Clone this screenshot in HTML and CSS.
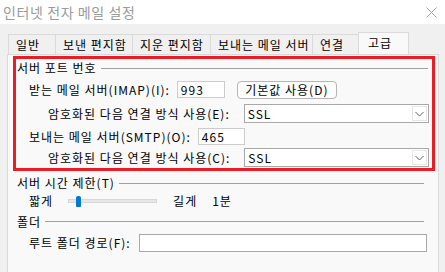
FILE: index.html
```html
<!DOCTYPE html>
<html>
<head>
  <meta charset="UTF-8">
  <link rel="stylesheet" href="styles.css">
</head>
<body>
  <div class="titlebar">
    <span class="title">인터넷 전자 메일 설정</span>
    <svg class="close" width="11" height="11" viewBox="0 0 11 11">
      <path d="M0.5 0.5 L10.5 10.5 M10.5 0.5 L0.5 10.5" stroke="#a0a0a0" stroke-width="1" fill="none"/>
    </svg>
  </div>

  <div class="dialog">
    <div class="tabs">
      <div class="tab tab-general">일반</div>
      <div class="tab tab-sent">보낸 편지함</div>
      <div class="tab tab-deleted">지운 편지함</div>
      <div class="tab tab-outgoing">보내는 메일 서버</div>
      <div class="tab tab-connect">연결</div>
      <div class="tab tab-advanced active">고급</div>
    </div>

    <div class="panel">
      <div class="highlight">
        <div class="legend legend-ports"><span>서버 포트 번호</span></div>

        <div class="row row-imap">
          <span class="label indent">받는 메일 서버(IMAP)(I):</span>
          <div class="field field-port">993</div>
          <div class="button">기본값 사용(D)</div>
        </div>

        <div class="row row-enc1">
          <span class="label indent-deep">암호화된 다음 연결 방식 사용(E):</span>
          <div class="select">
            <span>SSL</span>
            <span class="arrow">
              <svg width="9" height="6" viewBox="0 0 9 6"><path d="M0.5 1 L4.5 5 L8.5 1" stroke="#606060" fill="none"/></svg>
            </span>
          </div>
        </div>

        <div class="row row-smtp">
          <span class="label indent">보내는 메일 서버(SMTP)(O):</span>
          <div class="field field-port">465</div>
        </div>

        <div class="row row-enc2">
          <span class="label indent-deep">암호화된 다음 연결 방식 사용(C):</span>
          <div class="select">
            <span>SSL</span>
            <span class="arrow">
              <svg width="9" height="6" viewBox="0 0 9 6"><path d="M0.5 1 L4.5 5 L8.5 1" stroke="#606060" fill="none"/></svg>
            </span>
          </div>
        </div>
      </div>

      <div class="group">
        <div class="legend legend-timeout"><span>서버 시간 제한(T)</span></div>
        <div class="row row-slider">
          <span class="label indent">짧게</span>
          <div class="slider">
            <div class="track"></div>
            <div class="thumb"></div>
          </div>
          <span class="label">길게</span>
          <span class="label value">1분</span>
        </div>

        <div class="legend legend-folder"><span>폴더</span></div>
        <div class="row row-path">
          <span class="label indent">루트 폴더 경로(F):</span>
          <div class="field field-path"></div>
        </div>
      </div>
    </div>
  </div>
</body>
</html>
```

FILE: styles.css
```css
* {
  margin: 0;
  padding: 0;
  box-sizing: border-box;
}

body {
  width: 445px;
  height: 272px;
  overflow: hidden;
  background: #f0f0f0;
  color: #000000;
  font-family: "Noto Sans CJK KR", "Noto Sans", sans-serif;
  font-size: 12px;
  letter-spacing: 1px;
  line-height: 1;
}

.titlebar {
  height: 24px;
  background: #ffffff;
  display: flex;
  align-items: center;
  justify-content: space-between;
  padding: 0 8px 0 3px;
}

.title {
  color: #9a9a9a;
  font-size: 14px;
  letter-spacing: 0.6px;
}

.dialog {
  padding: 8px 6px 0 7px;
}

/* Tabs */
.tabs {
  display: flex;
  align-items: flex-end;
  height: 22px;
  padding-left: 1px;
}

.tab {
  height: 20px;
  border: 1px solid #dadada;
  border-bottom: none;
  border-right: none;
  background: #f0f0f0;
  display: flex;
  align-items: center;
  padding-left: 7px;
  white-space: nowrap;
}

.tab-general { width: 47px; }
.tab-sent { width: 77px; }
.tab-deleted { width: 78px; }
.tab-outgoing { width: 102px; }
.tab-connect { width: 46px; }

.tab.active {
  width: 51px;
  height: 22px;
  background: #f9f9f9;
  border-right: 1px solid #dadada;
  padding-left: 9px;
  padding-bottom: 2px;
}

.panel {
  height: 230px;
  background: #f9f9f9;
  border: 1px solid #dadada;
  padding: 1px 3px 0 5px;
}

/* Red highlight box */
.highlight {
  border: 3px solid #ec1c24;
  padding: 0 3px 1px 1px;
}

.legend {
  height: 18px;
  display: flex;
  align-items: center;
  padding-right: 1px;
  white-space: nowrap;
}

.legend::after {
  content: "";
  flex: 1;
  height: 1px;
  background: #a0a0a0;
  margin-left: 4px;
}

.row {
  display: flex;
  align-items: center;
  height: 19px;
}

.row-imap { margin-top: 3px; }
.row-enc1 { margin-top: 5px; }
.row-smtp { margin-top: 4px; }
.row-enc2 { margin-top: 2px; }

.indent { margin-left: 12px; }
.indent-deep { margin-left: 31px; }

.label {
  white-space: nowrap;
}

.field {
  background: #ffffff;
  border: 1px solid #cccccc;
  height: 17px;
  display: flex;
  align-items: center;
  padding-left: 3px;
}

.row-imap .field-port {
  width: 48px;
  margin-left: 7px;
}

.row-smtp .field-port {
  width: 47px;
  margin-left: 7px;
}

.button {
  width: 100px;
  height: 18px;
  margin-left: 12px;
  background: #fdfdfd;
  border: 1px solid #b5b5b5;
  border-radius: 4px;
  display: flex;
  align-items: center;
  justify-content: center;
}

.select {
  flex: 1;
  height: 19px;
  margin-left: 14px;
  background: #ffffff;
  border: 1px solid #a8a8a8;
  display: flex;
  align-items: center;
  justify-content: space-between;
  padding: 0 1px 0 3px;
}

.arrow {
  width: 15px;
  height: 15px;
  border: 1px solid #e6e6e6;
  display: flex;
  align-items: center;
  justify-content: center;
}

/* Lower groups */
.group {
  padding: 0 10px 0 4px;
}

.legend-timeout {
  margin-top: 3px;
}

.row-slider {
  height: 18px;
}

.slider {
  position: relative;
  width: 89px;
  height: 12px;
  margin: 0 16px 0 15px;
  display: flex;
  align-items: center;
}

.track {
  width: 100%;
  height: 4px;
  background: #e6e8e8;
  border: 1px solid #d6d8d8;
}

.thumb {
  position: absolute;
  left: 8px;
  top: 1px;
  width: 5px;
  height: 11px;
  background: #0078d7;
  border-radius: 2px 2px 1px 1px;
}

.value {
  margin-left: 15px;
}

.legend-folder {
  margin-top: 2px;
  height: 19px;
}

.row-path {
  margin-top: 2px;
}

.field-path {
  flex: 1;
  height: 18px;
  margin-left: 8px;
  border-color: #a8a8a8;
  margin-right: -2px;
}
```
